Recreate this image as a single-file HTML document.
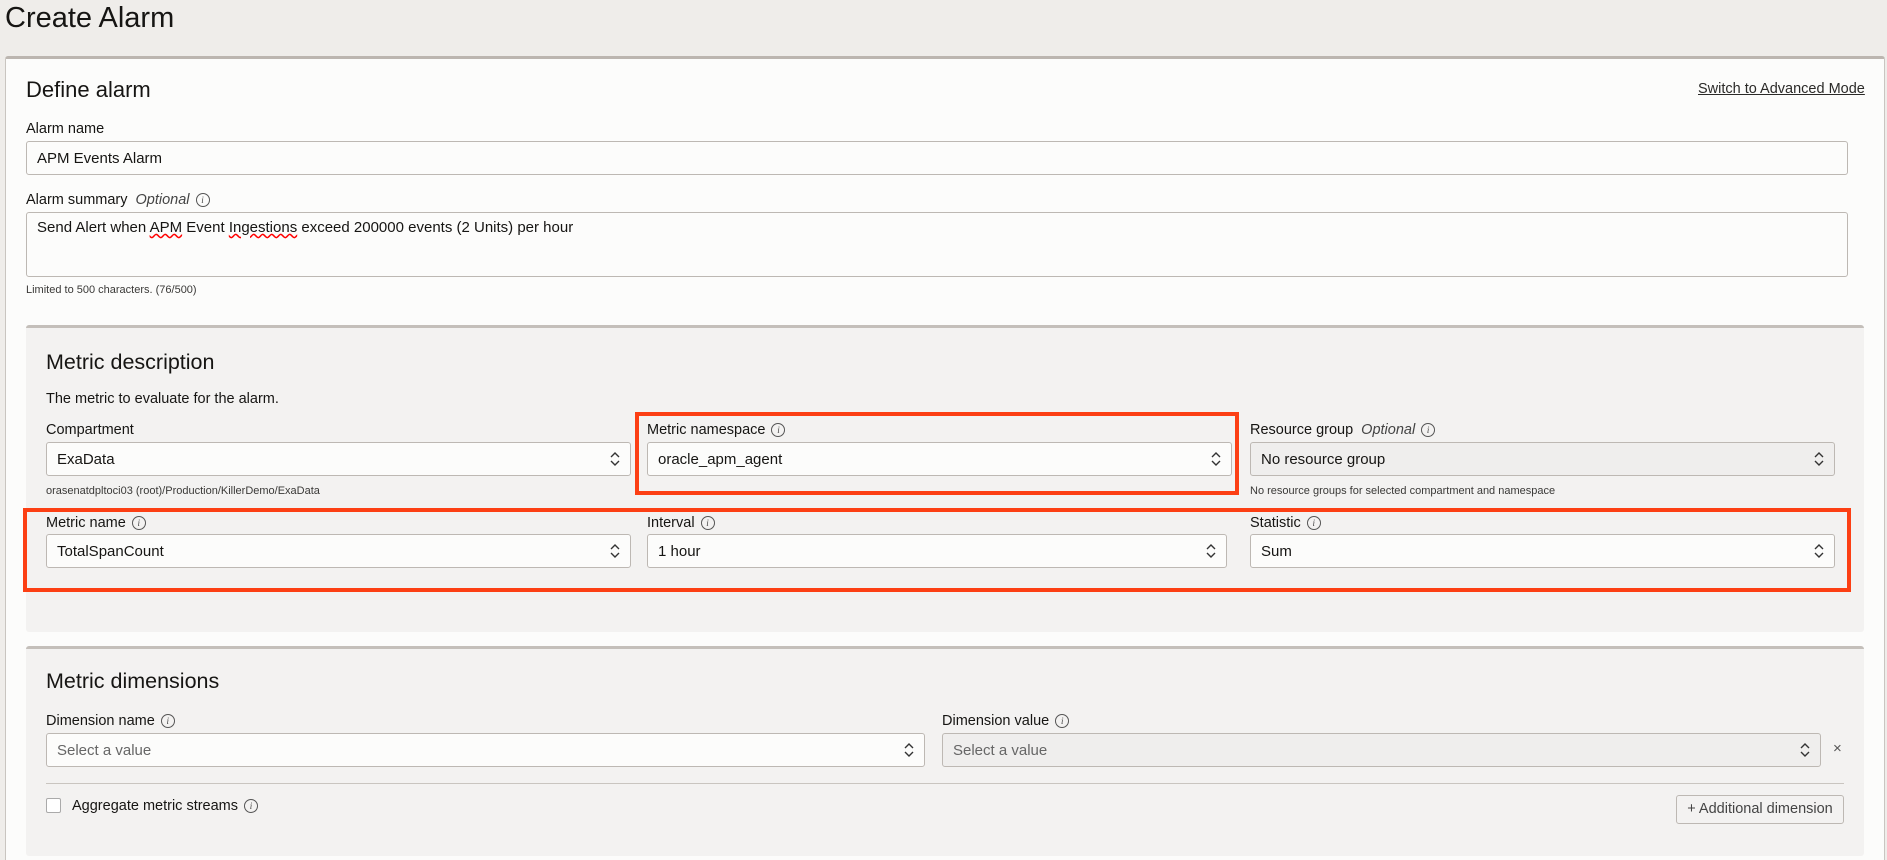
<!DOCTYPE html>
<html style="overflow:hidden;height:860px"><head><meta charset="utf-8"><style>
*{box-sizing:border-box;margin:0;padding:0}
body{width:1887px;height:860px;overflow:hidden;background:#efedea;font-family:"Liberation Sans",Arial,sans-serif;color:#161513;position:relative}
.a{position:absolute;white-space:nowrap}
.card{position:absolute;left:5px;top:56px;width:1880px;height:804px;background:#fcfcfb;border:1px solid #c9c5c0;border-bottom:none;border-top:3px solid #bcb6b0;border-radius:3px 3px 0 0}
.panel{position:absolute;left:26px;width:1838px;background:#f3f2f1;border-top:3px solid #c4bfba;border-radius:3px}
.lbl{font-size:14.5px;color:#161513}
.inp{position:absolute;height:34px;background:#fcfcfb;border:1px solid #bdb8b3;border-radius:3px;font-size:15px;line-height:33px;padding-left:10px}
.sel{padding-left:10px}
.car{position:absolute;right:10px;top:8px;width:10px;height:16px}
.info{display:inline-block;width:14px;height:14px;border:1px solid #555;border-radius:50%;font-size:9px;line-height:12px;text-align:center;font-style:italic;font-family:"Liberation Serif",serif;vertical-align:1px;margin-left:6px;color:#444}
.opt{font-style:italic;color:#444;margin-left:8px}
.red{position:absolute;border:4px solid #fc3f14}
.h{font-size:21.5px}
.small{font-size:11px;color:#3a3937}
</style></head><body>
<div class="a" style="left:5px;top:2px;font-size:29px;color:#161513">Create Alarm</div>
<div class="card"></div>
<div class="a h" style="left:26px;top:77px;font-size:22px">Define alarm</div>
<div class="a" style="left:1698px;top:81px;font-size:14.5px;text-decoration:underline;color:#2b2a28">Switch to Advanced Mode</div>
<div class="a lbl" style="left:26px;top:121px">Alarm name</div>
<div class="inp" style="left:26px;top:141px;width:1822px">APM Events Alarm</div>
<div class="a lbl" style="left:26px;top:192px">Alarm summary<span class="opt">Optional</span><span class="info">i</span></div>
<div class="inp" style="left:26px;top:212px;width:1822px;height:65px;line-height:30px">Send Alert when <span style="text-decoration:underline wavy red">APM</span> Event <span style="text-decoration:underline wavy red">Ingestions</span> exceed 200000 events (2 Units) per hour</div>
<div class="a small" style="left:26px;top:284px">Limited to 500 characters. (76/500)</div>

<div class="panel" style="top:325px;height:307px"></div>
<div class="a h" style="left:46px;top:350px">Metric description</div>
<div class="a lbl" style="left:46px;top:391px">The metric to evaluate for the alarm.</div>

<div class="a lbl" style="left:46px;top:422px">Compartment</div>
<div class="a lbl" style="left:647px;top:422px">Metric namespace<span class="info">i</span></div>
<div class="a lbl" style="left:1250px;top:422px">Resource group<span class="opt">Optional</span><span class="info">i</span></div>

<div class="inp sel" style="left:46px;top:442px;width:585px">ExaData<svg class="car" viewBox="0 0 10 16"><path d="M1 6 L5 2 L9 6 M1 10 L5 14 L9 10" fill="none" stroke="#333" stroke-width="1.4"/></svg></div>
<div class="inp sel" style="left:647px;top:442px;width:585px">oracle_apm_agent<svg class="car" viewBox="0 0 10 16"><path d="M1 6 L5 2 L9 6 M1 10 L5 14 L9 10" fill="none" stroke="#333" stroke-width="1.4"/></svg></div>
<div class="inp sel" style="left:1250px;top:442px;width:585px;background:#efeeed">No resource group<svg class="car" viewBox="0 0 10 16"><path d="M1 6 L5 2 L9 6 M1 10 L5 14 L9 10" fill="none" stroke="#333" stroke-width="1.4"/></svg></div>
<div class="a small" style="left:46px;top:485px">orasenatdpltoci03 (root)/Production/KillerDemo/ExaData</div>
<div class="a small" style="left:1250px;top:485px">No resource groups for selected compartment and namespace</div>

<div class="a lbl" style="left:46px;top:515px">Metric name<span class="info">i</span></div>
<div class="a lbl" style="left:647px;top:515px">Interval<span class="info">i</span></div>
<div class="a lbl" style="left:1250px;top:515px">Statistic<span class="info">i</span></div>
<div class="inp sel" style="left:46px;top:534px;width:585px">TotalSpanCount<svg class="car" viewBox="0 0 10 16"><path d="M1 6 L5 2 L9 6 M1 10 L5 14 L9 10" fill="none" stroke="#333" stroke-width="1.4"/></svg></div>
<div class="inp sel" style="left:647px;top:534px;width:580px">1 hour<svg class="car" viewBox="0 0 10 16"><path d="M1 6 L5 2 L9 6 M1 10 L5 14 L9 10" fill="none" stroke="#333" stroke-width="1.4"/></svg></div>
<div class="inp sel" style="left:1250px;top:534px;width:585px">Sum<svg class="car" viewBox="0 0 10 16"><path d="M1 6 L5 2 L9 6 M1 10 L5 14 L9 10" fill="none" stroke="#333" stroke-width="1.4"/></svg></div>

<div class="red" style="left:635px;top:412px;width:604px;height:83px"></div>
<div class="red" style="left:23px;top:508px;width:1828px;height:84px"></div>

<div class="panel" style="top:646px;height:210px"></div>
<div class="a h" style="left:46px;top:669px">Metric dimensions</div>
<div class="a lbl" style="left:46px;top:713px">Dimension name<span class="info">i</span></div>
<div class="a lbl" style="left:942px;top:713px">Dimension value<span class="info">i</span></div>
<div class="inp sel" style="left:46px;top:733px;width:879px;color:#666">Select a value<svg class="car" viewBox="0 0 10 16"><path d="M1 6 L5 2 L9 6 M1 10 L5 14 L9 10" fill="none" stroke="#333" stroke-width="1.4"/></svg></div>
<div class="inp sel" style="left:942px;top:733px;width:879px;background:#efeeed;color:#666">Select a value<svg class="car" viewBox="0 0 10 16"><path d="M1 6 L5 2 L9 6 M1 10 L5 14 L9 10" fill="none" stroke="#333" stroke-width="1.4"/></svg></div>
<div class="a" style="left:1833px;top:740px;font-size:15px;color:#555">×</div>
<div class="a" style="left:46px;top:783px;width:1798px;height:1px;background:#c9c5c0"></div>
<div class="a" style="left:46px;top:798px;width:15px;height:15px;border:1px solid #aaa;border-radius:2px;background:#fff"></div>
<div class="a lbl" style="left:72px;top:798px">Aggregate metric streams<span class="info">i</span></div>
<div class="a" style="left:1676px;top:795px;width:168px;height:29px;border:1px solid #bdb8b3;border-radius:3px;font-size:14.5px;line-height:27px;text-align:center;color:#444">+ Additional dimension</div>
</body></html>
